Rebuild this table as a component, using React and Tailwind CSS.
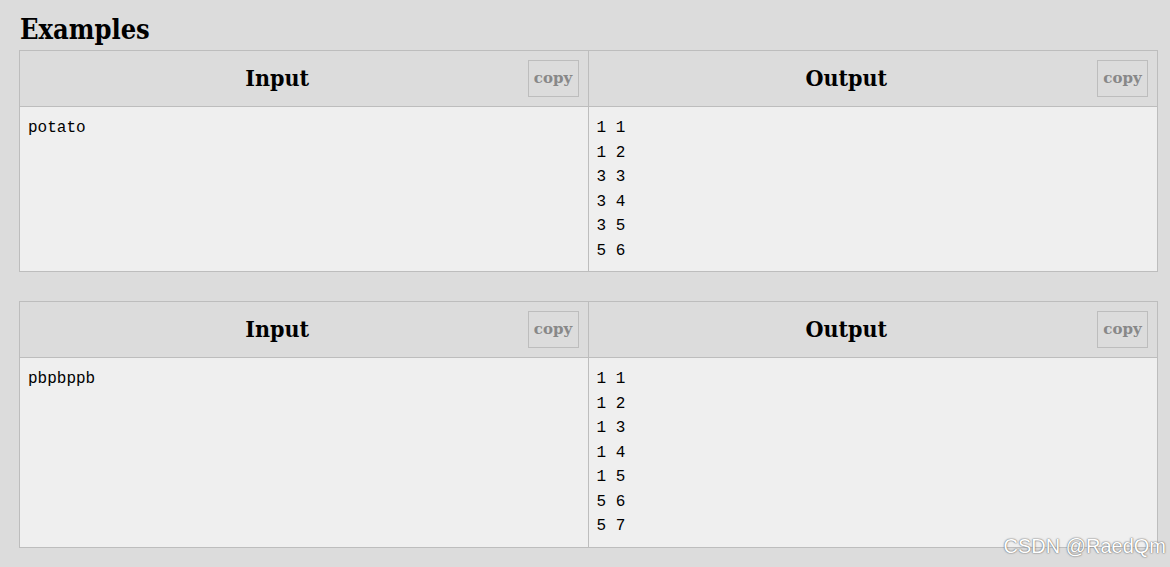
import React from "react";

const serif = { fontFamily: '"DejaVu Serif Condensed", "DejaVu Serif", "Liberation Serif", serif' };
const copyFont = { fontFamily: '"DejaVu Serif", "Liberation Serif", serif' };
const mono = { fontFamily: '"Liberation Mono", "DejaVu Sans Mono", monospace' };

function Cell({ title, lines, border }) {
  return (
    <div className={`flex flex-col ${border ? "border-r border-[#bdbdbd]" : ""}`}>
      <div className="h-[56px] bg-[#dcdcdc] border-b border-[#bdbdbd] pt-[9px] pr-[9px] pl-[7px]">
        <div
          className="float-right w-[51px] h-[37px] border border-[#bdbdbd] text-[#888] font-bold text-[15px] flex items-center justify-center"
          style={copyFont}
        >
          copy
        </div>
        <div className="text-center font-bold text-[23px] leading-[36px] text-black" style={serif}>
          {title}
        </div>
      </div>
      <div className="flex-1 bg-[#efefef] pl-[8px] pt-[9px] pb-[8px] text-[16px] leading-[24.5px] text-black" style={mono}>
        {lines.map((l, i) => (
          <div key={i} className="whitespace-pre">{l}</div>
        ))}
      </div>
    </div>
  );
}

function Example({ input, output }) {
  return (
    <div className="grid grid-cols-2 border border-[#bdbdbd] w-[1139px]">
      <Cell title="Input" lines={input} border />
      <Cell title="Output" lines={output} />
    </div>
  );
}

export default function App() {
  return (
    <div className="w-[1170px] h-[567px] bg-[#dcdcdc] relative overflow-hidden pl-[19px]">
      <div className="h-[50px] pl-[1px] pt-[13px] text-[27px] leading-[34px] font-bold text-black" style={serif}>
        Examples
      </div>
      <div className="flex flex-col gap-[29px]">
        <Example input={["potato"]} output={["1 1", "1 2", "3 3", "3 4", "3 5", "5 6"]} />
        <Example input={["pbpbppb"]} output={["1 1", "1 2", "1 3", "1 4", "1 5", "5 6", "5 7"]} />
      </div>
      <div
        className="absolute right-[4px] bottom-[6px] text-[20px] text-white"
        style={{ fontFamily: '"Liberation Sans", Arial, sans-serif', textShadow: "0 0 2px #777, 0 0 1px #555" }}
      >
        CSDN @RaedQm
      </div>
    </div>
  );
}
